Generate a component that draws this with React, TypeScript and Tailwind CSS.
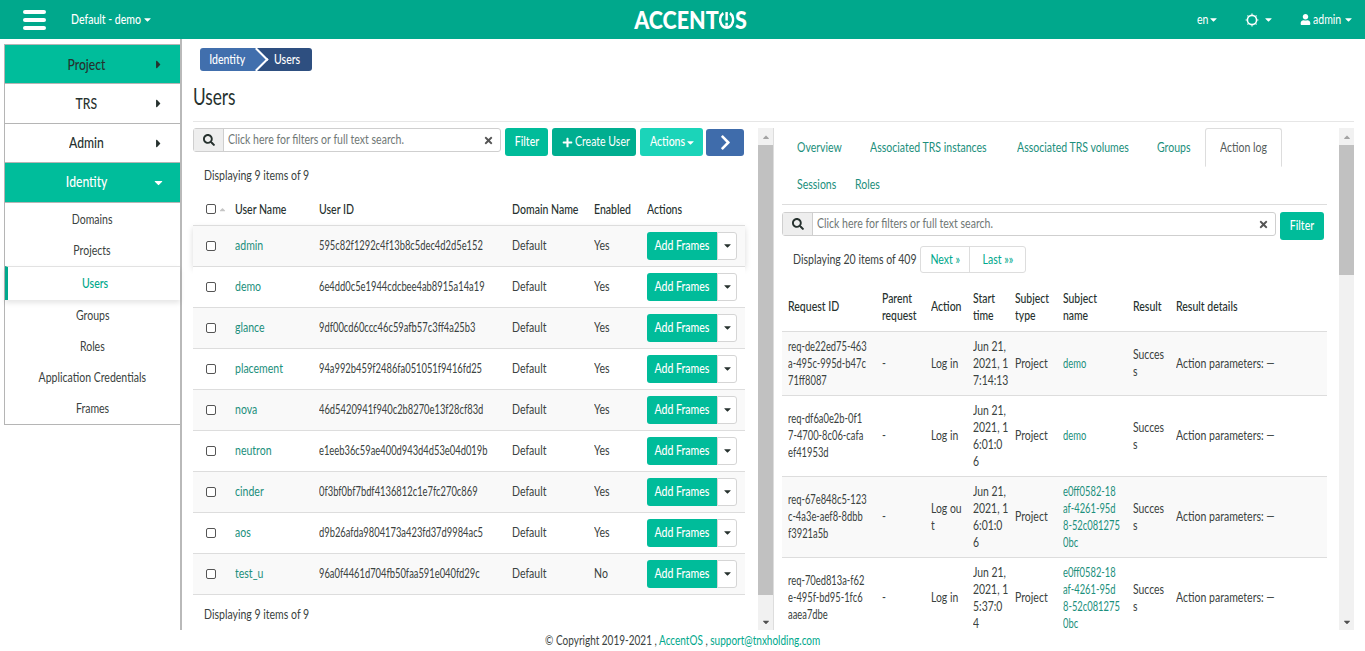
import type { ReactNode } from 'react'
import { FaCaretDown, FaCaretRight, FaCaretUp, FaChevronRight, FaPlus, FaSearch, FaTimes, FaUser } from 'react-icons/fa'

const users = [
  ['admin', '595c82f1292c4f13b8c5dec4d2d5e152', 'Yes'],
  ['demo', '6e4dd0c5e1944cdcbee4ab8915a14a19', 'Yes'],
  ['glance', '9df00cd60ccc46c59afb57c3ff4a25b3', 'Yes'],
  ['placement', '94a992b459f2486fa051051f9416fd25', 'Yes'],
  ['nova', '46d5420941f940c2b8270e13f28cf83d', 'Yes'],
  ['neutron', 'e1eeb36c59ae400d943d4d53e04d019b', 'Yes'],
  ['cinder', '0f3bf0bf7bdf4136812c1e7fc270c869', 'Yes'],
  ['aos', 'd9b26afda9804173a423fd37d9984ac5', 'Yes'],
  ['test_u', '96a0f4461d704fb50faa591e040fd29c', 'No'],
]

const longSubject = ['e0ff0582-18', 'af-4261-95d', '8-52c081275', '0bc']

const logs = [
  { id: ['req-de22ed75-463', 'a-495c-995d-b47c', '71ff8087'], action: ['Log in'], time: ['Jun 21,', '2021, 1', '7:14:13'], subject: ['demo'], h: 'h-[64px]' },
  { id: ['req-df6a0e2b-0f1', '7-4700-8c06-cafa', 'ef41953d'], action: ['Log in'], time: ['Jun 21,', '2021, 1', '6:01:0', '6'], subject: ['demo'], h: 'h-[81px]' },
  { id: ['req-67e848c5-123', 'c-4a3e-aef8-8dbb', 'f3921a5b'], action: ['Log ou', 't'], time: ['Jun 21,', '2021, 1', '6:01:0', '6'], subject: longSubject, h: 'h-[81px]' },
  { id: ['req-70ed813a-f62', 'e-495f-bd95-1fc6', 'aaea7dbe'], action: ['Log in'], time: ['Jun 21,', '2021, 1', '5:37:0', '4'], subject: longSubject, h: 'h-[81px]' },
]

const subItems = [
  { name: 'Domains', cls: 'h-[31px]' },
  { name: 'Projects', cls: 'h-[31px]' },
  { name: 'Users', cls: 'h-[34px]' },
  { name: 'Groups', cls: 'h-[31px]' },
  { name: 'Roles', cls: 'h-[31px]' },
  { name: 'Application Credentials', cls: 'h-[32px]' },
  { name: 'Frames', cls: 'h-[30px]' },
]

// the original font is a condensed one, none is installed so squeeze Lato
function T({ children, center }: { children: ReactNode; center?: boolean }) {
  return <span className={`inline-block whitespace-nowrap scale-x-[.81] ${center ? 'origin-center' : 'origin-left'}`}>{children}</span>
}

function Mono({ children }: { children: ReactNode }) {
  return <span className="block whitespace-nowrap origin-left scale-x-[.72]">{children}</span>
}

function Lines({ items }: { items: string[] }) {
  return (
    <>
      {items.map((s, i) => (
        <span key={i} className="block whitespace-nowrap origin-left scale-x-[.8]">{s}</span>
      ))}
    </>
  )
}

function Gear() {
  return (
    <svg viewBox="0 0 14 14" className="ml-[26px] h-[14px] w-[14px] shrink-0" fill="none" stroke="white">
      <circle cx="7" cy="7" r="4.6" strokeWidth="1.6" />
      <path d="M7 .6v1.2M7 12.2v1.2M.6 7h1.2M12.2 7h1.2M2.5 2.5l.8.8M10.7 10.7l.8.8M11.5 2.5l-.8.8M3.3 10.7l-.8.8" strokeWidth="1.2" />
    </svg>
  )
}

function MainItem({ name, active, open, h }: { name: string; active?: boolean; open?: boolean; h: string }) {
  return (
    <div className={`relative flex ${h} items-center justify-center pr-[12px] text-[15px] font-medium border-b border-[#b5b5b5] ${active ? 'bg-[#00bd9b]' : 'bg-white'} ${open ? 'text-white' : 'text-[#26312e]'}`}>
      <T center>{name}</T>
      <span className="absolute right-[15px] top-[13px]">
        {open ? <FaCaretDown className="text-white text-[13px]" /> : <FaCaretRight className="text-[#26312e] text-[13px]" />}
      </span>
    </div>
  )
}

function Sidebar() {
  return (
    <aside className="w-[182px] shrink-0 border-r-2 border-[#b9b9b9] pt-[5px] pl-[4px]">
      <div className="border-l border-t border-b border-[#b5b5b5]">
        <MainItem name="Project" active h="h-[39px]" />
        <MainItem name="TRS" h="h-[40px]" />
        <MainItem name="Admin" h="h-[39px] pb-[1px]" />
        <MainItem name="Identity" active open h="h-[40px] pb-[2px]" />
        <div className="pt-[1px] text-[#3a4240]">
          {subItems.map(s =>
            s.name === 'Users' ? (
              <div key={s.name} className={`${s.cls} flex items-center justify-center border-t border-[#e2e2e2] border-l-[3px] border-l-[#00a88c] pl-[2px] font-medium text-[#00a88c] shadow-[0_3px_5px_rgba(0,0,0,0.1)]`}>
                <T center>{s.name}</T>
              </div>
            ) : (
              <div key={s.name} className={`${s.cls} flex items-center justify-center`}><T center>{s.name}</T></div>
            ),
          )}
        </div>
      </div>
    </aside>
  )
}

function SearchBox() {
  return (
    <div className="flex h-[24px] flex-1 rounded-[3px] border border-[#cfcfcf] bg-white">
      <div className="flex w-[30px] items-center justify-center border-r border-[#cfcfcf] bg-[#eeeeee] text-[#26312e]">
        <FaSearch className="text-[12px]" />
      </div>
      <div className="flex flex-1 items-center justify-between pl-[4px] pr-[6px] text-[#6f7775]">
        <T>Click here for filters or full text search.</T>
        <FaTimes className="text-[11px] text-[#555]" />
      </div>
    </div>
  )
}

function Scrollbar({ thumb, gap }: { thumb: string; gap: string }) {
  return (
    <div className="flex h-full w-[15px] shrink-0 flex-col bg-[#f1f1f1]">
      <div className="flex h-[17px] items-center justify-center text-[#a3a3a3]">
        <FaCaretUp className="text-[10px]" />
      </div>
      <div className={`${thumb} bg-[#c1c1c1]`} />
      <div className={gap} />
      <div className="flex h-[17px] items-center justify-center text-[#505050]">
        <FaCaretDown className="text-[10px]" />
      </div>
    </div>
  )
}

function UsersPanel() {
  return (
    <div className="w-[552px] shrink-0">
      <div className="flex h-[28px] items-start gap-[4px] pr-[1px]">
        <SearchBox />
        <button className="flex h-[28px] w-[43px] items-center justify-center rounded-[3px] bg-[#00bc9a] font-medium text-white"><T center>Filter</T></button>
        <button className="flex h-[28px] w-[84px] items-center rounded-[3px] bg-[#00ae90] pl-[10px] text-white">
          <FaPlus className="mr-[2px] shrink-0 text-[11px]" /> <T>Create User</T>
        </button>
        <button className="flex h-[28px] w-[63px] items-center rounded-[3px] bg-[#1bd4b9] pl-[10px] font-medium text-white">
          <span className="w-[35px]"><T>Actions</T></span> <FaCaretDown className="text-[11px]" />
        </button>
        <button className="ml-[-1px] mt-[1px] flex h-[27px] w-[38px] items-center justify-center rounded-[3px] bg-[#3f6cab] text-white">
          <FaChevronRight className="text-[17px]" />
        </button>
      </div>
      <div className="pl-[11px] pt-[11px] leading-[17px] text-[#3a4240]"><T>Displaying 9 items of 9</T></div>
      <table className="mt-[10px] w-full table-fixed border-collapse text-[#3a4240]">
        <thead>
          <tr className="h-[31px] border-b border-[#dddddd] text-left text-[#26312e]">
            <th className="w-[42px] pl-[13px] font-medium">
              <div className="flex items-center gap-[2px]">
                <span className="h-[10px] w-[10px] rounded-[2px] border border-[#555] bg-white" />
                <FaCaretUp className="text-[9px] text-[#c5c5c5]" />
              </div>
            </th>
            <th className="w-[84px] font-medium"><T>User Name</T></th>
            <th className="w-[193px] font-medium"><T>User ID</T></th>
            <th className="w-[82px] font-medium"><T>Domain Name</T></th>
            <th className="w-[53px] font-medium"><T>Enabled</T></th>
            <th className="font-medium"><T>Actions</T></th>
          </tr>
        </thead>
        <tbody>
          {users.map((u, i) => (
            <tr key={u[0]} className={`h-[41px] border-b border-[#dddddd] ${i === 0 ? 'bg-[#f9f9f9] shadow-[0_3px_6px_rgba(0,0,0,0.15)]' : i % 2 === 0 ? 'bg-[#f9f9f9]' : 'bg-white'}`}>
              <td className="pl-[13px]">
                <span className="block h-[10px] w-[10px] rounded-[2px] border border-[#555] bg-white" />
              </td>
              <td className="text-[#1c8f7c]"><T>{u[0]}</T></td>
              <td><Mono>{u[1]}</Mono></td>
              <td><T>Default</T></td>
              <td><T>{u[2]}</T></td>
              <td>
                <div className="flex h-[28px] w-[90px]">
                  <span className="flex w-[70px] items-center justify-center rounded-l-[3px] bg-[#00bc9a] font-medium text-white"><T center>Add Frames</T></span>
                  <span className="flex w-[20px] items-center justify-center rounded-r-[3px] border border-[#d5d5d5] bg-white text-[#26312e]">
                    <FaCaretDown className="text-[11px]" />
                  </span>
                </div>
              </td>
            </tr>
          ))}
        </tbody>
      </table>
      <div className="pl-[11px] pt-[11px] leading-[17px] text-[#3a4240]"><T>Displaying 9 items of 9</T></div>
    </div>
  )
}

function Tab({ name, active, cls }: { name: string; active?: boolean; cls: string }) {
  if (active) {
    return (
      <div className={`mb-[-1px] flex h-[39px] items-center rounded-t-[3px] border border-[#dddddd] border-b-white bg-white pl-[14px] pt-[1px] text-[#555d5b] ${cls}`}><T>{name}</T></div>
    )
  }
  return <div className={`flex h-[38px] items-center pl-[15px] text-[#1c8f7c] ${cls}`}><T>{name}</T></div>
}

function LogPanel() {
  return (
    <div className="w-[545px] shrink-0 overflow-hidden">
      <div className="flex flex-wrap border-b border-[#dddddd]">
        <Tab name="Overview" cls="w-[73px] pt-[1px]" />
        <Tab name="Associated TRS instances" cls="w-[147px] pt-[1px]" />
        <Tab name="Associated TRS volumes" cls="w-[140px] pt-[1px]" />
        <Tab name="Groups" cls="w-[63px] pt-[1px]" />
        <Tab name="Action log" active cls="w-[77px]" />
        <div className="w-full" />
        <Tab name="Sessions" cls="w-[58px]" />
        <Tab name="Roles" cls="w-[50px]" />
      </div>
      <div className="mt-[7px] flex h-[28px] items-start gap-[4px] pr-[3px]">
        <SearchBox />
        <button className="flex h-[28px] w-[44px] items-center justify-center rounded-[3px] bg-[#00bc9a] font-medium text-white"><T center>Filter</T></button>
      </div>
      <div className="mt-[6px] flex h-[27px] items-center pl-[11px] text-[#3a4240]">
        <span className="w-[127px]"><T>Displaying 20 items of 409</T></span>
        <div className="flex h-[27px] rounded-[3px] border border-[#dddddd] text-[#00a88c]">
          <span className="flex w-[49px] items-center justify-center border-r border-[#dddddd]"><T center>Next »</T></span>
          <span className="flex w-[55px] items-center justify-center"><T center>Last »»</T></span>
        </div>
      </div>
      <table className="mt-[10px] w-full table-fixed border-collapse leading-[17px] text-[#3a4240]">
        <thead>
          <tr className="h-[48px] border-b border-[#dddddd] text-left text-[#26312e]">
            <th className="w-[100px] pl-[6px] font-medium"><T>Request ID</T></th>
            <th className="w-[49px] font-medium"><Lines items={['Parent', 'request']} /></th>
            <th className="w-[42px] font-medium"><T>Action</T></th>
            <th className="w-[42px] font-medium"><Lines items={['Start', 'time']} /></th>
            <th className="w-[48px] font-medium"><Lines items={['Subject', 'type']} /></th>
            <th className="w-[70px] font-medium"><Lines items={['Subject', 'name']} /></th>
            <th className="w-[43px] font-medium"><T>Result</T></th>
            <th className="font-medium"><T>Result details</T></th>
          </tr>
        </thead>
        <tbody>
          {logs.map((l, i) => (
            <tr key={l.id[0]} className={`${l.h} border-b border-[#dddddd] ${i % 2 === 0 ? 'bg-[#f9f9f9]' : 'bg-white'}`}>
              <td className="pl-[6px]">{l.id.map(s => <Mono key={s}>{s}</Mono>)}</td>
              <td><T>-</T></td>
              <td><Lines items={l.action} /></td>
              <td><Lines items={l.time} /></td>
              <td><T>Project</T></td>
              <td className="text-[#1c8f7c]">{l.subject.map(s => <Mono key={s}>{s}</Mono>)}</td>
              <td><Lines items={['Succes', 's']} /></td>
              <td><T>Action parameters: —</T></td>
            </tr>
          ))}
        </tbody>
      </table>
    </div>
  )
}

export default function App() {
  return (
    <div className="flex h-[651px] flex-col overflow-hidden bg-white font-['Lato','Noto_Sans',sans-serif] text-[13px]">
      <header className="flex h-[39px] shrink-0 items-center bg-[#00a88c] text-white">
        <div className="ml-[23px] flex w-[23px] flex-col gap-[4px]">
          <span className="h-[4px] rounded-full bg-white" />
          <span className="h-[4px] rounded-full bg-white" />
          <span className="h-[4px] rounded-full bg-white" />
        </div>
        <div className="ml-[25px] flex w-[563px] items-center font-medium">
          <span className="w-[71px]"><T>Default - demo</T></span> <FaCaretDown className="text-[11px]" />
        </div>
        <div className="flex w-[113px] items-center justify-center text-[25px] font-black">
          <span className="inline-flex origin-center scale-x-[.86] items-center">
            ACCENT
            <svg viewBox="0 0 20 20" className="h-[19px] w-[19px]" fill="none" stroke="white" strokeWidth="3">
              <path d="M6 3.5a8 8 0 1 0 8 0" />
              <path d="M10 2v9M10 13.5v3" />
            </svg>
            S
          </span>
        </div>
        <div className="ml-auto mr-[11px] flex items-center">
          <span className="w-[11px]"><T>en</T></span>
          <FaCaretDown className="shrink-0 text-[11px]" />
          <Gear />
          <FaCaretDown className="ml-[4px] shrink-0 text-[11px]" />
          <FaUser className="ml-[26px] shrink-0 text-[11px]" />
          <span className="ml-[2px] w-[30px]"><T>admin</T></span>
          <FaCaretDown className="shrink-0 text-[11px]" />
        </div>
      </header>
      <div className="flex min-h-0 flex-1">
        <Sidebar />
        <main className="flex min-w-0 flex-1 flex-col pl-[11px]">
          <div className="ml-[7px] mt-[9px] flex h-[23px] w-[112px] overflow-hidden rounded-[3px] font-medium text-white">
            <span className="relative flex w-[56px] items-center justify-center bg-[#416fad] pr-[2px]">
              <span className="relative z-20"><T center>Identity</T></span>
              <span className="absolute right-[-9px] top-[3px] z-10 h-[17px] w-[17px] rotate-45 border-r-2 border-t-2 border-white bg-[#416fad]" />
            </span>
            <span className="flex flex-1 items-center justify-center bg-[#2e4f80] pl-[6px]"><T center>Users</T></span>
          </div>
          <h1 className="mt-[13px] h-[24px] text-[23px] leading-[24px] text-[#26312e]"><span className="inline-block origin-left scale-x-[.75]">Users</span></h1>
          <div className="mt-[13px] mr-[11px] border-t border-[#e6e6e6]" />
          <div className="mt-[6px] flex min-h-0 flex-1">
            <UsersPanel />
            <div className="ml-[13px]"><Scrollbar thumb="h-[450px]" gap="h-[18px]" /></div>
            <div className="mr-[8px] h-full border-l border-[#dddddd]" />
            <LogPanel />
            <div className="ml-[12px]"><Scrollbar thumb="h-[130px]" gap="h-[338px]" /></div>
          </div>
        </main>
      </div>
      <footer className="flex h-[21px] shrink-0 items-center justify-center text-[#3a4240]">
        <span className="origin-center scale-x-[.77] whitespace-nowrap">
          © Copyright 2019-2021 , <span className="text-[#00a88c]">AccentOS</span> , <span className="text-[#00a88c]">support@tnxholding.com</span>
        </span>
      </footer>
    </div>
  )
}
